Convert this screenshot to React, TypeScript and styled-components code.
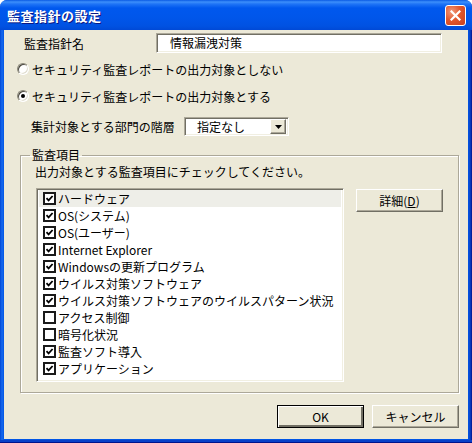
import styled, { createGlobalStyle } from "styled-components";

const GlobalStyle = createGlobalStyle`
  html, body {
    margin: 0;
    padding: 0;
    background: #ffffff;
  }
  body {
    font-family: "Noto Sans CJK JP", "Liberation Sans", sans-serif;
    font-size: 12px;
    color: #000000;
  }
`;

const items = [
  { label: "ハードウェア", checked: true },
  { label: "OS(システム)", checked: true },
  { label: "OS(ユーザー)", checked: true },
  { label: "Internet Explorer", checked: true },
  { label: "Windowsの更新プログラム", checked: true },
  { label: "ウイルス対策ソフトウェア", checked: true },
  { label: "ウイルス対策ソフトウェアのウイルスパターン状況", checked: true },
  { label: "アクセス制御", checked: false },
  { label: "暗号化状況", checked: false },
  { label: "監査ソフト導入", checked: true },
  { label: "アプリケーション", checked: true },
];

const App = () => {
  return (
    <>
      <GlobalStyle />
      <Window>
        <TitleBar>
          <Title>監査指針の設定</Title>
          <CloseButton>
            <svg width="11" height="11" viewBox="0 0 11 11">
              <path d="M1.5 1.5 L9.5 9.5 M9.5 1.5 L1.5 9.5" stroke="#fff" strokeWidth="2.2" strokeLinecap="square" />
            </svg>
          </CloseButton>
        </TitleBar>
        <Client>
          <NameRow>
            <FieldLabel>監査指針名</FieldLabel>
            <TextInput>情報漏洩対策</TextInput>
          </NameRow>
          <RadioRow $gap={8}>
            <Radio />
            <span>セキュリティ監査レポートの出力対象としない</span>
          </RadioRow>
          <RadioRow $gap={11}>
            <Radio $checked />
            <span>セキュリティ監査レポートの出力対象とする</span>
          </RadioRow>
          <ComboRow>
            <ComboLabel>集計対象とする部門の階層</ComboLabel>
            <Combo>
              <ComboText>指定なし</ComboText>
              <DropButton>
                <svg width="7" height="4" viewBox="0 0 7 4">
                  <path d="M0 0 H7 L3.5 4 Z" fill="#000" />
                </svg>
              </DropButton>
            </Combo>
          </ComboRow>
          <GroupBox>
            <Legend>監査項目</Legend>
            <Hint>出力対象とする監査項目にチェックしてください。</Hint>
            <GroupBody>
              <ListBox>
                {items.map((item, i) => (
                  <ListRow key={item.label} $selected={i === 0}>
                    <CheckBox>
                      {item.checked && (
                        <svg width="9" height="9" viewBox="0 0 9 9">
                          <path d="M1.5 4.2 L3.6 6.4 L7.6 2" stroke="#000" strokeWidth="1.8" fill="none" />
                        </svg>
                      )}
                    </CheckBox>
                    <span>{item.label}</span>
                  </ListRow>
                ))}
              </ListBox>
              <Button>
                詳細(<u>D</u>)
              </Button>
            </GroupBody>
          </GroupBox>
          <Footer>
            <Button $default>OK</Button>
            <Button>キャンセル</Button>
          </Footer>
        </Client>
      </Window>
    </>
  );
};

const Window = styled.div`
  width: 472px;
  height: 443px;
  display: flex;
  flex-direction: column;
  box-sizing: border-box;
  border-radius: 7px 7px 0 0;
  overflow: hidden;
  padding: 0 4px 4px;
  background: linear-gradient(to right, #0046d5 0px, #166aee 2px, #0055e5 4px, #0055e5 468px, #0a44c8 470px, #00138c 472px);
  box-shadow: inset 0 -1px #00138c, inset 0 -3px #0840c8;
`;

const TitleBar = styled.div`
  height: 30px;
  margin: 0 -4px;
  display: flex;
  align-items: center;
  justify-content: space-between;
  padding: 0 6px 0 7px;
  background: linear-gradient(
    to bottom,
    #0a5ae4 0px,
    #3d8ffb 2px,
    #1f74f6 4px,
    #0058ee 8px,
    #0056ea 18px,
    #0052e2 26px,
    #0049d6 30px
  );
`;

const Title = styled.div`
  color: #ffffff;
  font-size: 13px;
  font-weight: bold;
  letter-spacing: 0.5px;
  text-shadow: 1px 1px #0a1883;
`;

const CloseButton = styled.div`
  width: 21px;
  height: 21px;
  box-sizing: border-box;
  display: flex;
  align-items: center;
  justify-content: center;
  border: 1px solid #ffffff;
  border-radius: 3px;
  background: radial-gradient(circle at 30% 30%, #f09a7c 0%, #e2582e 45%, #c8401e 100%);
`;

const Client = styled.div`
  flex: 1;
  background: #ece9d8;
  display: flex;
  flex-direction: column;
`;

const NameRow = styled.div`
  margin-top: 3px;
  height: 20px;
  display: flex;
  align-items: center;
`;

const FieldLabel = styled.div`
  width: 152px;
  padding-left: 20px;
  box-sizing: border-box;
`;

const sunken = `
  box-sizing: border-box;
  border: 1px solid;
  border-color: #aca899 #ffffff #ffffff #aca899;
  box-shadow: inset 1px 1px #716f64, inset -1px -1px #f1efe2;
  background: #ffffff;
`;

const TextInput = styled.div`
  ${sunken}
  width: 286px;
  height: 20px;
  line-height: 18px;
  padding-left: 13px;
`;

const RadioRow = styled.div<{ $gap: number }>`
  margin-top: ${(p) => p.$gap}px;
  height: 16px;
  display: flex;
  align-items: center;
  gap: 3px;
  padding-left: 13px;
`;

const Radio = styled.span<{ $checked?: boolean }>`
  width: 12px;
  height: 12px;
  box-sizing: border-box;
  border-radius: 50%;
  border: 1px solid;
  border-color: #8a8778 #ffffff #ffffff #8a8778;
  box-shadow: inset 1px 1px #4a4840, inset -1px -1px #e0ddcf;
  background: #ffffff;
  display: flex;
  align-items: center;
  justify-content: center;
  &::after {
    content: "";
    width: 4px;
    height: 4px;
    border-radius: 50%;
    background: ${(p) => (p.$checked ? "#000000" : "transparent")};
  }
`;

const ComboRow = styled.div`
  margin-top: 13px;
  height: 19px;
  display: flex;
  align-items: center;
  padding-left: 27px;
`;

const ComboLabel = styled.div`
  width: 153px;
`;

const Combo = styled.div`
  ${sunken}
  width: 105px;
  height: 19px;
  display: flex;
  align-items: center;
  justify-content: space-between;
  padding: 2px;
`;

const ComboText = styled.span`
  padding-left: 10px;
`;

const raised = `
  box-sizing: border-box;
  background: #ece9d8;
  border: 1px solid;
  border-color: #ffffff #716f64 #716f64 #ffffff;
  box-shadow: inset -1px -1px #aca899;
`;

const DropButton = styled.div`
  ${raised}
  width: 16px;
  height: 15px;
  display: flex;
  align-items: center;
  justify-content: center;
`;

const GroupBox = styled.fieldset`
  margin: 12px 0 0 16px;
  width: 439px;
  height: 245px;
  box-sizing: border-box;
  padding: 0 13px 0 14px;
  border: 1px solid #aca899;
  box-shadow: inset 1px 1px #ffffff, 1px 1px #ffffff;
  min-width: 0;
`;

const Legend = styled.legend`
  margin-left: -5px;
  padding: 0 2px;
  line-height: 14px;
`;

const Hint = styled.div`
  margin-top: 3px;
  line-height: 14px;
`;

const GroupBody = styled.div`
  margin-top: 9px;
  display: flex;
  align-items: flex-start;
  gap: 12px;
`;

const ListBox = styled.div`
  ${sunken}
  margin-left: 1px;
  width: 308px;
  height: 194px;
  padding: 1px 2px;
  display: flex;
  flex-direction: column;
`;

const ListRow = styled.div<{ $selected?: boolean }>`
  height: 17px;
  display: flex;
  align-items: center;
  gap: 2px;
  padding-left: 4px;
  white-space: nowrap;
  background: ${(p) => (p.$selected ? "#eeeee8" : "transparent")};
`;

const CheckBox = styled.span`
  width: 13px;
  height: 13px;
  box-sizing: border-box;
  border: 2px solid #1a1a1a;
  background: #ffffff;
  display: flex;
  align-items: center;
  justify-content: center;
`;

const Button = styled.div<{ $default?: boolean }>`
  ${raised}
  width: 87px;
  height: 23px;
  display: flex;
  align-items: center;
  justify-content: center;
  margin-top: 1px;
  ${(p) =>
    p.$default &&
    `
    border-color: #000000;
    box-shadow: inset 1px 1px #ffffff, inset -2px -2px #716f64;
  `}
  u {
    text-decoration: underline;
  }
`;

const Footer = styled.div`
  margin-top: 11px;
  display: flex;
  justify-content: flex-end;
  gap: 8px;
  padding-right: 9px;
`;

export default App;
